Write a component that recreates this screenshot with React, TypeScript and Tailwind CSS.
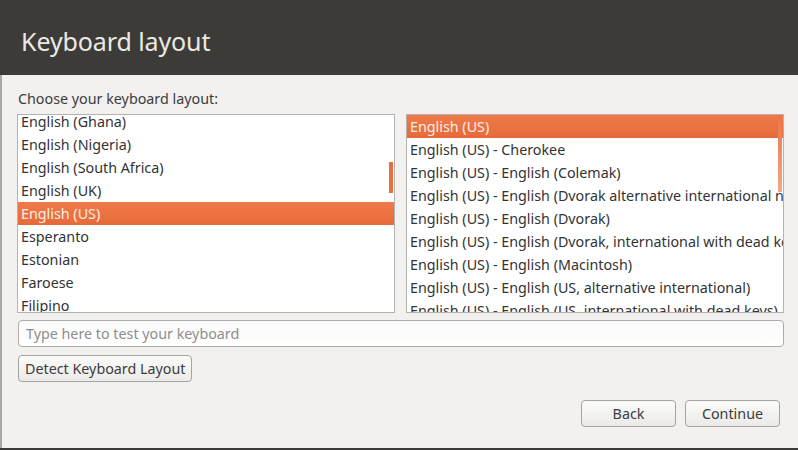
import React from "react";

const left = [
  "English (Ghana)",
  "English (Nigeria)",
  "English (South Africa)",
  "English (UK)",
  "English (US)",
  "Esperanto",
  "Estonian",
  "Faroese",
  "Filipino",
];
const right = [
  "English (US)",
  "English (US) - Cherokee",
  "English (US) - English (Colemak)",
  "English (US) - English (Dvorak alternative international no dead keys)",
  "English (US) - English (Dvorak)",
  "English (US) - English (Dvorak, international with dead keys)",
  "English (US) - English (Macintosh)",
  "English (US) - English (US, alternative international)",
  "English (US) - English (US, international with dead keys)",
];

function Row({ text, sel }: { text: string; sel: boolean }) {
  return (
    <div
      className={
        "h-[23px] leading-[23px] px-[3px] whitespace-nowrap " +
        (sel
          ? "bg-gradient-to-b from-[#f07a4a] to-[#e66a38] text-[#fbeee6]"
          : "text-[#333333]")
      }
    >
      {text}
    </div>
  );
}

export default function App() {
  return (
    <div
      className="w-[798px] h-[450px] flex flex-col bg-[#f2f1f0] overflow-hidden text-[14.3px]"
      style={{ fontFamily: '"Noto Sans", "DejaVu Sans", sans-serif' }}
    >
      <div className="h-[75px] bg-[#3c3b37] flex items-center pl-[21px] pt-[8px]">
        <span className="text-[25px] text-[#ebe9e4] tracking-[-0.1px]">Keyboard layout</span>
      </div>
      <div className="flex-1 border-l-[2px] border-[#a9a8a5] flex flex-col pl-[15px] pr-[14px]">
        <div className="h-[39px] flex items-end pb-[5px] pl-[1px] text-[#3c3c3c]">
          Choose your keyboard layout:
        </div>
        <div className="flex gap-[11px] h-[199px]">
          <div className="relative w-[379px] h-full bg-white border border-[#b4b3b0] overflow-hidden">
            <div className="-mt-[5px]">
              {left.map((t) => (
                <Row key={t} text={t} sel={t === "English (US)"} />
              ))}
            </div>
            <div className="absolute right-[1px] top-[47px] w-[4px] h-[31px] bg-[#e8703f]" />
          </div>
          <div className="relative w-[379px] h-full bg-white border border-[#b4b3b0] overflow-hidden">
            <div>
              {right.map((t, i) => (
                <Row key={t} text={t} sel={i === 0} />
              ))}
            </div>
            <div className="absolute right-[1px] top-0 w-[4px] h-[77px] bg-gradient-to-b from-[#ec7444] to-[#f3a787]" />
          </div>
        </div>
        <div className="mt-[7px] ml-[1px] w-[766px] h-[27px] rounded-[4px] border border-[#adaca9] bg-gradient-to-b from-[#fafafa] to-white flex items-center pl-[7px] text-[#8e8e8e]">
          Type here to test your keyboard
        </div>
        <div className="mt-[8px] ml-[1px]">
          <button className="h-[27px] px-[6px] rounded-[4px] border border-[#a5a4a1] bg-gradient-to-b from-[#fbfbfa] to-[#ebeae8] text-[#3c3c3c]">
            Detect Keyboard Layout
          </button>
        </div>
        <div className="flex justify-end gap-[9px] mt-[18px] pr-[4px]">
          <button className="w-[95px] h-[27px] rounded-[4px] border border-[#a5a4a1] bg-gradient-to-b from-[#fbfbfa] to-[#ebeae8] text-[#3c3c3c]">
            Back
          </button>
          <button className="w-[95px] h-[27px] rounded-[4px] border border-[#a5a4a1] bg-gradient-to-b from-[#fbfbfa] to-[#ebeae8] text-[#3c3c3c]">
            Continue
          </button>
        </div>
      </div>
      <div className="h-[2px] bg-[#3c3b37]" />
    </div>
  );
}
